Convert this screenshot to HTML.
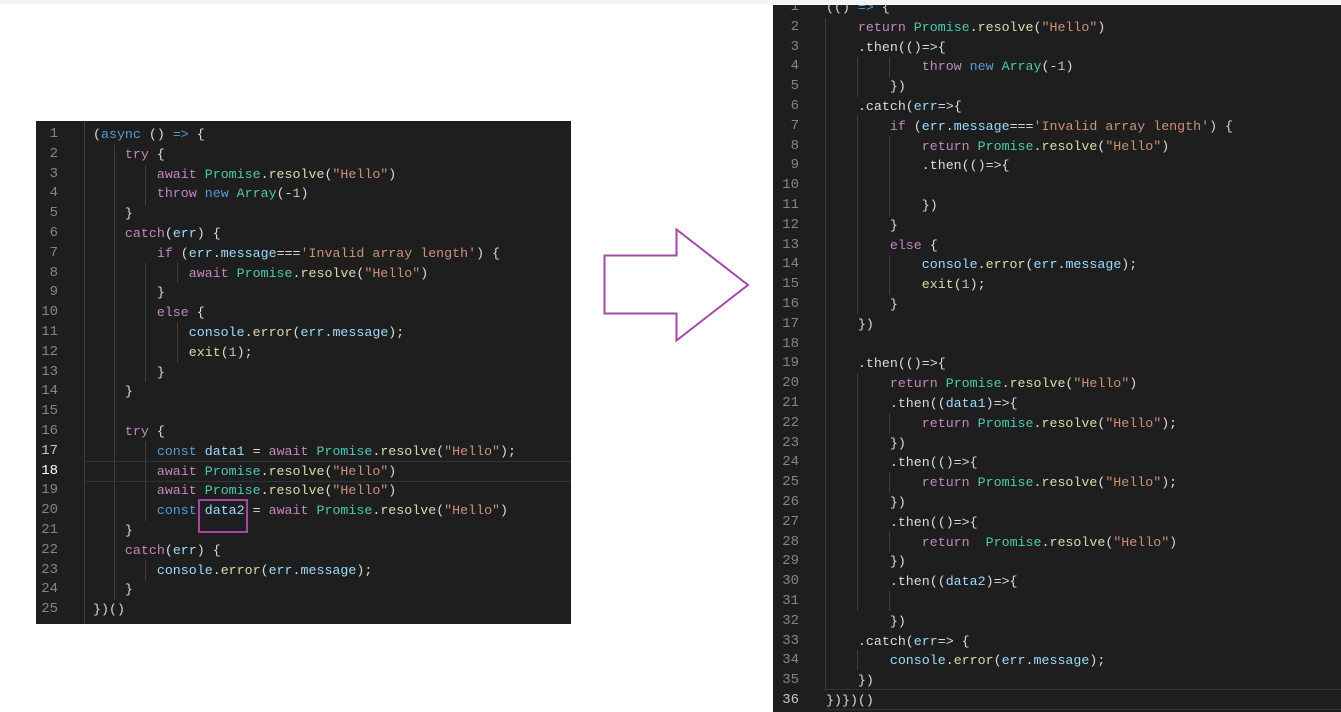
<!DOCTYPE html>
<html><head><meta charset="utf-8"><style>
html,body{margin:0;padding:0;background:#fff;width:1341px;height:712px;overflow:hidden;position:relative}
.p{position:absolute;background:#1e1e1e;overflow:hidden}
pre{position:absolute;margin:0;font-family:"Liberation Mono",monospace;font-size:13.3px;line-height:19.8px;color:#dcdcdc;white-space:pre}
.n{color:#858585;text-align:right;width:24px;font-size:14px}
.k{color:#c586c0}.b{color:#569cd6}.t{color:#4ec9b0}.f{color:#dcdcaa}.v{color:#9cdcfe}.s{color:#ce9178}.m{color:#b5cea8}
.g{position:absolute;width:1px;background:#404040}
</style></head><body>
<div style="position:absolute;left:0;top:0;width:1341px;height:4px;background:#f3f3f3"></div>
<div class="p" style="left:36px;top:121px;width:535px;height:503px">
<div class="g" style="left:48px;top:0;height:503px"></div>
<div class="g" style="left:78px;top:24px;height:455px"></div>
<div class="g" style="left:109px;top:44px;height:40px"></div>
<div class="g" style="left:109px;top:142px;height:119px"></div>
<div class="g" style="left:109px;top:320px;height:80px"></div>
<div class="g" style="left:109px;top:439px;height:20px"></div>
<div class="g" style="left:141px;top:142px;height:20px"></div>
<div class="g" style="left:141px;top:202px;height:40px"></div>
<div style="position:absolute;left:48px;top:340px;width:487px;height:19px;border-top:1px solid #333;border-bottom:1px solid #333"></div>
<pre class="n" style="left:0;top:4px;width:22px">1
2
3
4
5
6
7
8
9
10
11
12
13
14
15
16
<span style="color:#c6c6c6">17</span>
<span style="color:#fff">18</span>
19
20
21
22
23
24
25</pre>
<pre style="left:57px;top:4px">(<span class="b">async</span> () <span class="b">=&gt;</span> {
    <span class="k">try</span> {
        <span class="k">await</span> <span class="t">Promise</span>.<span class="f">resolve</span>(<span class="s">"Hello"</span>)
        <span class="k">throw</span> <span class="b">new</span> <span class="t">Array</span>(-<span class="m">1</span>)
    }
    <span class="k">catch</span>(<span class="v">err</span>) {
        <span class="k">if</span> (<span class="v">err</span>.<span class="v">message</span>===<span class="s">'Invalid array length'</span>) {
            <span class="k">await</span> <span class="t">Promise</span>.<span class="f">resolve</span>(<span class="s">"Hello"</span>)
        }
        <span class="k">else</span> {
            <span class="v">console</span>.<span class="f">error</span>(<span class="v">err</span>.<span class="v">message</span>);
            <span class="f">exit</span>(<span class="m">1</span>);
        }
    }

    <span class="k">try</span> {
        <span class="b">const</span> <span class="v">data1</span> = <span class="k">await</span> <span class="t">Promise</span>.<span class="f">resolve</span>(<span class="s">"Hello"</span>);
        <span class="k">await</span> <span class="t">Promise</span>.<span class="f">resolve</span>(<span class="s">"Hello"</span>)
        <span class="k">await</span> <span class="t">Promise</span>.<span class="f">resolve</span>(<span class="s">"Hello"</span>)
        <span class="b">const</span> <span class="v">data2</span> = <span class="k">await</span> <span class="t">Promise</span>.<span class="f">resolve</span>(<span class="s">"Hello"</span>)
    }
    <span class="k">catch</span>(<span class="v">err</span>) {
        <span class="v">console</span>.<span class="f">error</span>(<span class="v">err</span>.<span class="v">message</span>);
    }
})()</pre>
<div style="position:absolute;left:162px;top:378px;width:46px;height:30px;border:2px solid #a347a8"></div>
</div>
<svg style="position:absolute;left:0;top:0" width="1341" height="712"><polygon points="604.5,255.5 676.5,255.5 676.5,229.5 748,285 676.5,340.5 676.5,313.5 604.5,313.5" fill="none" stroke="#a347a8" stroke-width="2"/></svg>
<div class="p" style="left:773px;top:5px;width:568px;height:707px">
<div class="g" style="left:52px;top:13px;height:673px"></div>
<div class="g" style="left:84px;top:52px;height:40px"></div>
<div class="g" style="left:84px;top:111px;height:198px"></div>
<div class="g" style="left:84px;top:368px;height:238px"></div>
<div class="g" style="left:84px;top:645px;height:20px"></div>
<div class="g" style="left:116px;top:52px;height:20px"></div>
<div class="g" style="left:116px;top:131px;height:80px"></div>
<div class="g" style="left:116px;top:250px;height:40px"></div>
<div class="g" style="left:116px;top:408px;height:20px"></div>
<div class="g" style="left:116px;top:467px;height:20px"></div>
<div class="g" style="left:116px;top:527px;height:20px"></div>
<div class="g" style="left:116px;top:586px;height:20px"></div>
<div style="position:absolute;left:52px;top:684px;width:516px;height:19px;border-top:1px solid #333;border-bottom:1px solid #333"></div>
<pre class="n" style="left:0;top:-7px;width:26px">1
2
3
4
5
6
7
8
9
10
11
12
13
14
15
16
17
18
19
20
21
22
23
24
25
26
27
28
29
30
31
32
33
34
35
<span style="color:#c6c6c6">36</span></pre>
<pre style="left:53px;top:-7px">(() <span class="b">=&gt;</span> {
    <span class="k">return</span> <span class="t">Promise</span>.<span class="f">resolve</span>(<span class="s">"Hello"</span>)
    .then(()=&gt;{
            <span class="k">throw</span> <span class="b">new</span> <span class="t">Array</span>(-<span class="m">1</span>)
        })
    .catch(<span class="v">err</span>=&gt;{
        <span class="k">if</span> (<span class="v">err</span>.<span class="v">message</span>===<span class="s">'Invalid array length'</span>) {
            <span class="k">return</span> <span class="t">Promise</span>.<span class="f">resolve</span>(<span class="s">"Hello"</span>)
            .then(()=&gt;{

            })
        }
        <span class="k">else</span> {
            <span class="v">console</span>.<span class="f">error</span>(<span class="v">err</span>.<span class="v">message</span>);
            <span class="f">exit</span>(<span class="m">1</span>);
        }
    })

    .then(()=&gt;{
        <span class="k">return</span> <span class="t">Promise</span>.<span class="f">resolve</span>(<span class="s">"Hello"</span>)
        .then((<span class="v">data1</span>)=&gt;{
            <span class="k">return</span> <span class="t">Promise</span>.<span class="f">resolve</span>(<span class="s">"Hello"</span>);
        })
        .then(()=&gt;{
            <span class="k">return</span> <span class="t">Promise</span>.<span class="f">resolve</span>(<span class="s">"Hello"</span>);
        })
        .then(()=&gt;{
            <span class="k">return</span>  <span class="t">Promise</span>.<span class="f">resolve</span>(<span class="s">"Hello"</span>)
        })
        .then((<span class="v">data2</span>)=&gt;{

        })
    .catch(<span class="v">err</span>=&gt; {
        <span class="v">console</span>.<span class="f">error</span>(<span class="v">err</span>.<span class="v">message</span>);
    })
})})()</pre>
</div>
</body></html>
